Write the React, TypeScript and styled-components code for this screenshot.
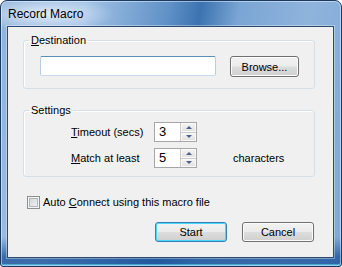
import styled, { createGlobalStyle, css } from "styled-components";

const Global = createGlobalStyle`
  html, body {
    margin: 0;
    padding: 0;
    background: #ffffff;
  }
  body {
    font-family: "Liberation Sans", Arial, sans-serif;
    font-size: 11px;
    color: #000;
  }
`;

const Window = styled.div`
  width: 342px;
  height: 267px;
  box-sizing: border-box;
  display: flex;
  flex-direction: column;
  padding: 0 7px 8px 6px;
  border: 1px solid #1b3a62;
  border-radius: 7px 7px 3px 3px;
  background:
    radial-gradient(ellipse 72px 18px at 42px 13px, rgba(255, 255, 255, 0.7), rgba(255, 255, 255, 0) 100%),
    linear-gradient(to bottom, rgba(24, 80, 150, 0) 0px, rgba(24, 80, 150, 0) 236px, rgba(24, 80, 150, 0.75) 256px),
    linear-gradient(100deg, #8db2dc 0%, #a2c2e6 22%, #5f90c6 44%, #3c73b0 52%, #7aa5d4 62%, #8fb4dc 80%, #7ea8d8 100%);
  box-shadow: inset 0 0 0 1px rgba(255, 255, 255, 0.45), inset 0 -2px 0 rgba(90, 210, 245, 0.6);
  overflow: hidden;
`;

const TitleBar = styled.div`
  height: 25px;
  flex: none;
  display: flex;
  align-items: center;
  padding-left: 1px;
  font-family: "Liberation Sans", Arial, sans-serif;
  font-size: 12px;
  color: #000;
`;

const Client = styled.div`
  flex: 1;
  background: #f0f0f0;
  border: 1px solid #2c4a70;
  box-shadow: 0 0 0 1px rgba(255, 255, 255, 0.35);
  padding: 0 18px 0 15px;
  display: flex;
  flex-direction: column;
`;

const Group = styled.fieldset<{ $top: number }>`
  margin: ${(p) => p.$top}px 0 0 0;
  padding: 0 5px;
  border: 1px solid #d5dfe5;
  border-radius: 3px;
  box-shadow: inset 1px 1px 0 #ffffff;
  min-width: 0;
`;

const Legend = styled.legend`
  margin: 0;
  padding: 0 2px;
  line-height: 13px;
  font-size: 11px;
`;

const Key = styled.span`
  text-decoration: underline;
`;

const DestBody = styled.div`
  padding: 9px 10px 11px 11px;
  display: flex;
  gap: 14px;
  align-items: flex-start;
`;

const TextInput = styled.div`
  width: 176px;
  height: 20px;
  box-sizing: border-box;
  background: #fff;
  border: 1px solid;
  border-color: #5a8cbb #b6cee6 #c6dbee #b6cee6;
  border-radius: 2px;
`;

const Button = styled.div<{ $default?: boolean }>`
  box-sizing: border-box;
  display: flex;
  align-items: center;
  justify-content: center;
  height: 21px;
  border: 1px solid #707070;
  border-radius: 3px;
  background: linear-gradient(#f2f2f2 0%, #ebebeb 48%, #dddddd 52%, #cfcfcf 100%);
  box-shadow: inset 0 0 0 1px #fcfcfc;
  font-size: 11px;
  ${(p) =>
    p.$default &&
    css`
      border-color: #3c7fb1;
      box-shadow: inset 0 0 0 1px #48d8fb;
    `}
`;

const BrowseButton = styled(Button)`
  width: 69px;
`;

const SettingsBody = styled.div`
  padding: 5px 10px 8px 42px;
  display: grid;
  grid-template-columns: 83px 43px auto;
  grid-auto-rows: 20px;
  row-gap: 6px;
  align-items: center;
`;

const Label = styled.span`
  line-height: 13px;
`;

const Unit = styled.span`
  margin-left: 36px;
`;

const Spin = styled.div`
  width: 43px;
  height: 20px;
  box-sizing: border-box;
  border: 1px solid #a7a7a7;
  display: flex;
  background: #fff;
`;

const SpinValue = styled.div`
  flex: 1;
  padding-left: 4px;
  font-size: 13px;
  line-height: 18px;
`;

const SpinButtons = styled.div`
  width: 15px;
  display: flex;
  flex-direction: column;
  gap: 1px;
  background: #c9c9c9;
  border-left: 1px solid #c9c9c9;
`;

const SpinHalf = styled.div`
  flex: 1;
  display: flex;
  align-items: center;
  justify-content: center;
  background: linear-gradient(#f6f6f6, #dedede);
  box-shadow: inset 0 0 0 1px #fafafa;
`;

const Arrow = styled.div<{ $down?: boolean }>`
  width: 0;
  height: 0;
  border-left: 3.5px solid transparent;
  border-right: 3.5px solid transparent;
  ${(p) =>
    p.$down
      ? css`border-top: 3px solid #4e5f8a;`
      : css`border-bottom: 3px solid #4e5f8a;`}
`;

const CheckRow = styled.div`
  margin: 19px 0 0 4px;
  display: flex;
  align-items: center;
  gap: 3px;
  height: 13px;
`;

const CheckBox = styled.div`
  width: 13px;
  height: 13px;
  box-sizing: border-box;
  border: 1px solid #8f8f8f;
  box-shadow: inset 0 0 0 1px #f4f4f4, inset 0 0 0 2px #b3b7bd;
  background: linear-gradient(135deg, #cbcfd5, #f6f6f6);
`;

const Footer = styled.div`
  margin-top: 13px;
  display: flex;
  justify-content: flex-end;
  gap: 15px;
  padding-right: 1px;
`;

const DialogButton = styled(Button)`
  width: 72px;
  height: 20px;
`;

function Spinner({ value }: { value: string }) {
  return (
    <Spin>
      <SpinValue>{value}</SpinValue>
      <SpinButtons>
        <SpinHalf>
          <Arrow />
        </SpinHalf>
        <SpinHalf>
          <Arrow $down />
        </SpinHalf>
      </SpinButtons>
    </Spin>
  );
}

export default function App() {
  return (
    <>
      <Global />
      <Window>
        <TitleBar>Record Macro</TitleBar>
        <Client>
          <Group $top={7}>
            <Legend>
              <Key>D</Key>estination
            </Legend>
            <DestBody>
              <TextInput />
              <BrowseButton>Browse...</BrowseButton>
            </DestBody>
          </Group>
          <Group $top={15}>
            <Legend>Settings</Legend>
            <SettingsBody>
              <Label>
                <Key>T</Key>imeout (secs)
              </Label>
              <Spinner value="3" />
              <span />
              <Label>
                <Key>M</Key>atch at least
              </Label>
              <Spinner value="5" />
              <Unit>characters</Unit>
            </SettingsBody>
          </Group>
          <CheckRow>
            <CheckBox />
            <Label>
              Auto <Key>C</Key>onnect using this macro file
            </Label>
          </CheckRow>
          <Footer>
            <DialogButton $default>Start</DialogButton>
            <DialogButton>Cancel</DialogButton>
          </Footer>
        </Client>
      </Window>
    </>
  );
}
